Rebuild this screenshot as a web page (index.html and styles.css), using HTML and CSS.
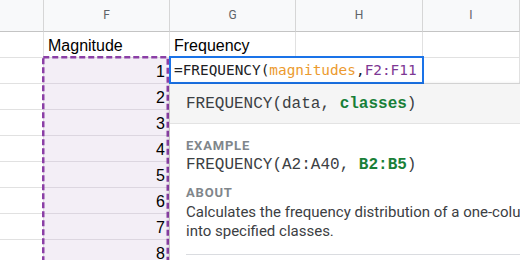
FILE: index.html
```html
<!DOCTYPE html>
<html>
<head>
<meta charset="utf-8">
<link rel="stylesheet" href="styles.css">
</head>
<body>
<div class="app">
  <div class="sheet">
    <div class="c hd"></div><div class="c hd">F</div><div class="c hd">G</div><div class="c hd">H</div><div class="c hd">I</div>
    <div class="c"></div><div class="c txt">Magnitude</div><div class="c txt">Frequency</div><div class="c"></div><div class="c"></div>
    <div class="c"></div><div class="c sel num">1</div><div class="c"></div><div class="c"></div><div class="c"></div>
    <div class="c"></div><div class="c sel num">2</div><div class="c"></div><div class="c"></div><div class="c"></div>
    <div class="c"></div><div class="c sel num">3</div><div class="c"></div><div class="c"></div><div class="c"></div>
    <div class="c"></div><div class="c sel num">4</div><div class="c"></div><div class="c"></div><div class="c"></div>
    <div class="c"></div><div class="c sel num">5</div><div class="c"></div><div class="c"></div><div class="c"></div>
    <div class="c"></div><div class="c sel num">6</div><div class="c"></div><div class="c"></div><div class="c"></div>
    <div class="c"></div><div class="c sel num">7</div><div class="c"></div><div class="c"></div><div class="c"></div>
    <div class="c"></div><div class="c sel num">8</div><div class="c"></div><div class="c"></div><div class="c"></div>
  </div>

  <svg class="range" width="128" height="210" viewBox="0 0 128 210">
    <rect x="1.25" y="1.25" width="124.5" height="230" fill="none" stroke="#8b3fa6" stroke-width="2.5" stroke-dasharray="6 3"/>
  </svg>

  <div class="editor"><span class="fn">=FREQUENCY(</span><span class="nr">magnitudes</span><span class="fn">,</span><span class="rg">F2:F11</span></div>

  <div class="popup">
    <div class="sig">FREQUENCY(data, <b class="arg">classes</b>)</div>
    <div class="body">
      <div class="label">EXAMPLE</div>
      <div class="code">FREQUENCY(A2:A40, <b class="arg">B2:B5</b>)</div>
      <div class="label about">ABOUT</div>
      <div class="desc">Calculates the frequency distribution of a one-column array into specified classes.</div>
      <div class="rule"></div>
    </div>
  </div>
</div>
</body>
</html>
```

FILE: styles.css
```css
html, body {
  margin: 0;
  padding: 0;
  background: #fff;
  overflow: hidden;
}

.app {
  position: relative;
  width: 520px;
  height: 260px;
  overflow: hidden;
  font-family: "Liberation Sans", Arial, sans-serif;
}

.sheet {
  display: grid;
  grid-template-columns: 44px 126px 126px 127px 1fr;
  grid-template-rows: 32px;
  grid-auto-rows: 26px;
}

.c {
  box-sizing: border-box;
  border-right: 1px solid #e1e1e1;
  border-bottom: 1px solid #e1e1e1;
  font-size: 16px;
  line-height: 24px;
  padding: 2px 4px 0 4px;
  color: #000;
  white-space: nowrap;
  overflow: hidden;
}

.hd {
  background: #f8f9fa;
  border-right-color: #d6d6d6;
  border-bottom-color: #c4c4c4;
  color: #5f6368;
  font-family: Roboto, "Liberation Sans", sans-serif;
  font-size: 12px;
  line-height: 31px;
  padding: 0;
  text-align: center;
}

.sel {
  background: #f3eef6;
  border-bottom-color: #dcd6e0;
}

.num {
  text-align: right;
  padding-right: 4px;
}

.range {
  position: absolute;
  left: 42px;
  top: 56px;
}

.editor {
  position: absolute;
  left: 169px;
  top: 56px;
  width: 255px;
  height: 28px;
  box-sizing: border-box;
  border: 2px solid #1a73e8;
  background: #fff;
  padding-left: 3px;
  font-family: "DejaVu Sans Mono", monospace;
  font-size: 14.4px;
  line-height: 24px;
  white-space: nowrap;
  overflow: hidden;
}

.fn { color: #202124; }
.nr { color: #ec9a2e; }
.rg { color: #7e3794; }

.popup {
  position: absolute;
  left: 170px;
  top: 84px;
  width: 380px;
  height: 200px;
  background: #fff;
  box-shadow: 0 1px 4px rgba(0, 0, 0, 0.28);
}

.sig {
  height: 40px;
  box-sizing: border-box;
  background: #f5f5f5;
  border-bottom: 1px solid #e3e3e3;
  padding-left: 16px;
  font-family: "Liberation Mono", "Courier New", monospace;
  font-size: 16px;
  line-height: 40px;
  color: #3c4043;
  white-space: nowrap;
}

.arg {
  color: #188038;
  font-weight: bold;
}

.body {
  padding: 14px 0 0 16px;
  display: flex;
  flex-direction: column;
}

.label {
  font-family: Roboto, "Liberation Sans", sans-serif;
  font-weight: bold;
  font-size: 13px;
  letter-spacing: 0.8px;
  color: #80868b;
  line-height: 16px;
}

.code {
  margin-top: 1px;
  font-family: "Liberation Mono", "Courier New", monospace;
  font-size: 16px;
  line-height: 20px;
  color: #3c4043;
  white-space: nowrap;
}

.about {
  margin-top: 10px;
}

.desc {
  margin-top: 2px;
  font-family: Roboto, "Liberation Sans", sans-serif;
  font-size: 15px;
  line-height: 19px;
  color: #3c4043;
  width: 420px;
}

.rule {
  margin-top: 13px;
  width: 400px;
  height: 1px;
  background: #dadce0;
}
```
